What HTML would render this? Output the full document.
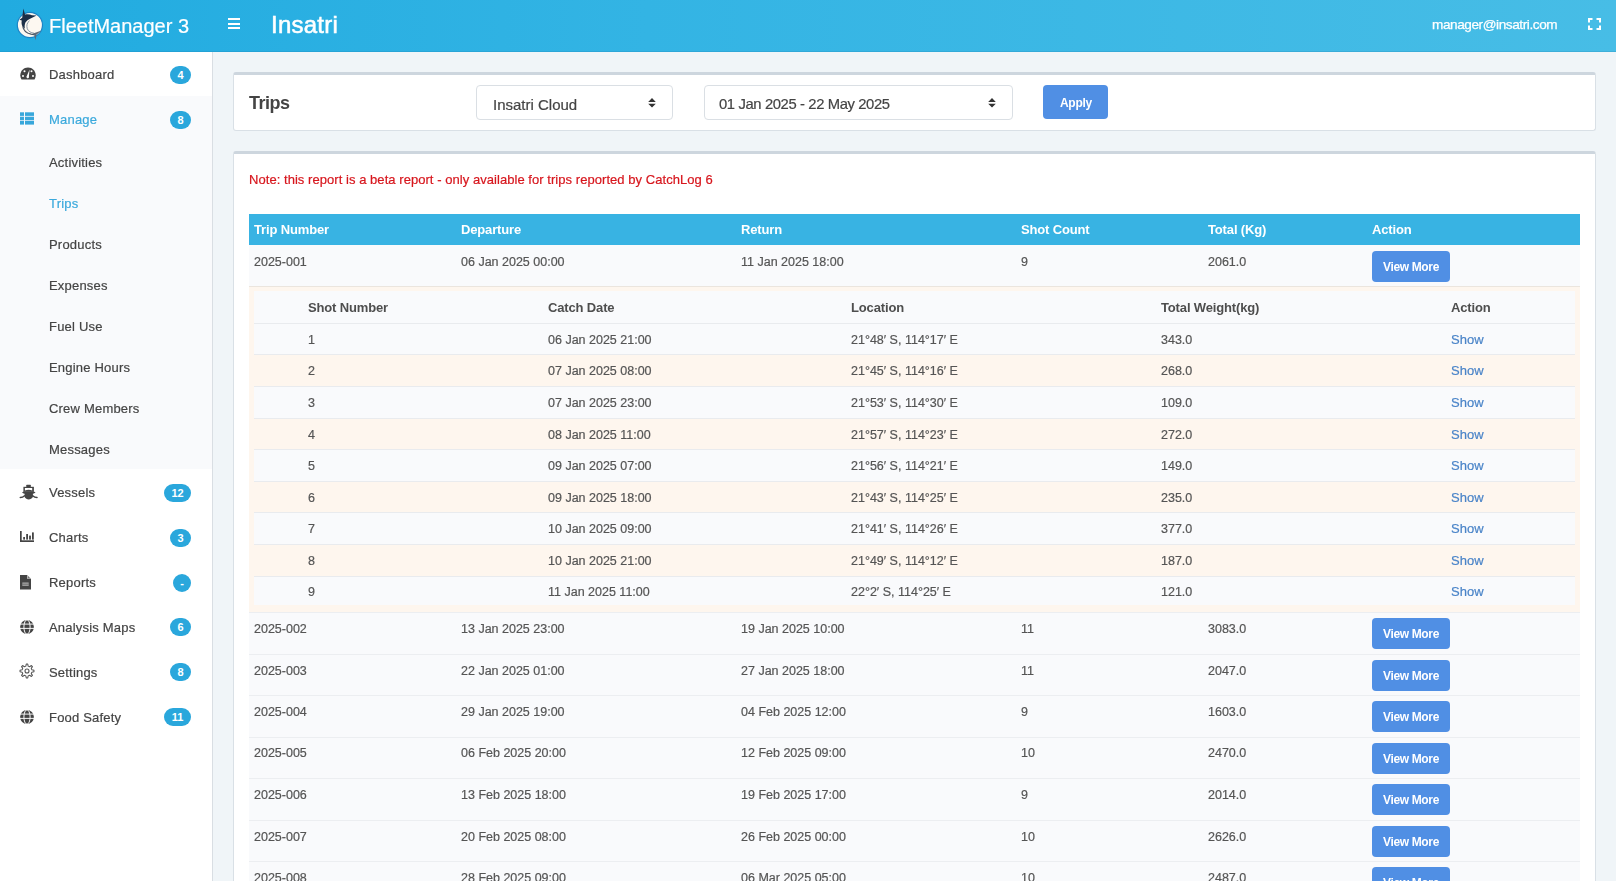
<!DOCTYPE html>
<html><head><meta charset="utf-8">
<style>
*{box-sizing:border-box;margin:0;padding:0}
html,body{width:1616px;height:881px;overflow:hidden}
body{font-family:"Liberation Sans",sans-serif;background:#f0f5f8;color:#444;position:relative}
.tx{position:absolute;white-space:nowrap;will-change:transform;-webkit-text-stroke:0.2px currentColor}
.hdr{position:absolute;left:0;top:0;width:1616px;height:52px;background:linear-gradient(90deg,#21abe0 0%,#33b4e4 40%,#47bde6 100%);box-shadow:inset 0 -1px 0 rgba(20,110,160,.18)}
.side{position:absolute;left:0;top:52px;width:213px;height:829px;background:#fff;border-right:1px solid #d9dee3}
.sub{position:absolute;left:0;top:44px;width:212px;height:373px;background:#f9fafc}
.bdg{position:absolute;height:18px;border-radius:9px;background:#2aa7dc;color:#fff;font-size:11px;font-weight:bold;text-align:center;line-height:18px}
.box{position:absolute;background:#fff;border:1px solid #d9e0e6;border-top:3px solid #cdd6de;border-radius:3px}
.sel{position:absolute;border:1px solid #dadfe4;border-radius:4px;background:#fff}
.btn{position:absolute;background:#508fe4;border-radius:4px;color:#fff}
.abs{position:absolute}
svg{position:absolute;overflow:visible}
</style></head><body>

<div class="hdr">
<svg style="left:0;top:0" width="60" height="52" viewBox="0 0 60 52">
<circle cx="29.9" cy="25" r="12.6" fill="#fdf8f1" stroke="#1b84c6" stroke-width="1.2"/>
<path d="M23.4 8.6 L25 14.6 C27 14 30 14.3 32 15.2 L36.6 15.4 L32.6 17.6 C31 18.6 29 19.2 27.5 20.2 L25.6 22.2 C24.6 24.2 24.4 26.5 24.9 28.8 L22.6 26.8 C21.5 24.6 21.3 22.3 21.8 20.6 L19.4 19.8 L22.2 17.8 Z" fill="#1c2f48"/>
<path d="M22.8 26.5 C23.5 30.5 26.5 33.2 31 34.2 L34 34.6" stroke="#4a5565" stroke-width="1.3" fill="none"/>
<path d="M29.5 20.8 C27 22.5 26.3 25.5 27.3 28.8 C28.5 31.5 31 32.8 34 33.2" stroke="#8a96a4" stroke-width="1" fill="none"/>
<path d="M33 33.6 L41.6 30.4 L36.4 34.8 L35.6 40.2 L34.2 35.2 Z" fill="#5d6a79"/>
</svg>
<div class="tx" style="left:49px;top:11px;font-size:20px;line-height:30px;color:#fff;">FleetManager 3</div>
<div class="abs" style="left:228px;top:18.3px;width:12px;height:2px;background:#fff"></div>
<div class="abs" style="left:228px;top:22.8px;width:12px;height:2px;background:#fff"></div>
<div class="abs" style="left:228px;top:27.1px;width:12px;height:2px;background:#fff"></div>
<div class="tx" style="left:270.5px;top:10px;font-size:24px;line-height:30px;color:#fff;letter-spacing:0.25px;-webkit-text-stroke:0.55px #fff;">Insatri</div>
<div class="tx" style="left:1432px;top:10px;font-size:13.6px;line-height:30px;color:#fff;letter-spacing:-0.42px;-webkit-text-stroke:0.25px #fff;">manager@insatri.com</div>
<svg style="left:1588px;top:18px" width="13" height="12" viewBox="0 0 13 12">
<path d="M1 4.5V1H4.5 M8.5 1H12V4.5 M12 7.5V11H8.5 M4.5 11H1V7.5" stroke="#fff" stroke-width="2" fill="none"/>
</svg>
</div>
<div class="side"><div class="sub"></div></div>
<div class="tx" style="left:48.5px;top:60px;font-size:13px;line-height:30px;color:#444;letter-spacing:0.2px;">Dashboard</div>
<svg style="left:20px;top:67.4px" width="16" height="13" viewBox="0 0 16 13">
<path d="M8 0.5C3.8 0.5 0.3 3.9 0.3 8.2c0 1.6 .4 3 1.2 4.3h13c.8-1.3 1.2-2.7 1.2-4.3C15.7 3.9 12.2 .5 8 .5z" fill="#444"/>
<circle cx="3" cy="9" r="1" fill="#fff"/><circle cx="4.5" cy="4.3" r="1" fill="#fff"/><circle cx="13" cy="9" r="1" fill="#fff"/><circle cx="11.5" cy="4.3" r="1" fill="#fff"/>
<path d="M9.6 2.6L8.9 9.3a1.3 1.3 0 1 1-2.1-.3z" fill="#fff"/></svg>
<div class="bdg" style="left:170px;top:66.0px;width:21px">4</div>
<div class="tx" style="left:48.5px;top:105px;font-size:13px;line-height:30px;color:#3ba9dc;letter-spacing:0.2px;">Manage</div>
<svg style="left:20px;top:112.1px" width="14" height="13" viewBox="0 0 14 13">
<g fill="#38a7db"><rect x="0" y="0.3" width="4" height="3.6"/><rect x="5" y="0.3" width="9" height="3.6"/>
<rect x="0" y="4.7" width="4" height="3.6"/><rect x="5" y="4.7" width="9" height="3.6"/>
<rect x="0" y="9" width="4" height="3.6"/><rect x="5" y="9" width="9" height="3.6"/></g></svg>
<div class="bdg" style="left:170px;top:110.7px;width:21px">8</div>
<div class="tx" style="left:48.5px;top:148px;font-size:13px;line-height:30px;color:#444;letter-spacing:0.2px;">Activities</div>
<div class="tx" style="left:48.5px;top:189px;font-size:13px;line-height:30px;color:#3ba9dc;letter-spacing:0.2px;">Trips</div>
<div class="tx" style="left:48.5px;top:230px;font-size:13px;line-height:30px;color:#444;letter-spacing:0.2px;">Products</div>
<div class="tx" style="left:48.5px;top:271px;font-size:13px;line-height:30px;color:#444;letter-spacing:0.2px;">Expenses</div>
<div class="tx" style="left:48.5px;top:312px;font-size:13px;line-height:30px;color:#444;letter-spacing:0.2px;">Fuel Use</div>
<div class="tx" style="left:48.5px;top:353px;font-size:13px;line-height:30px;color:#444;letter-spacing:0.2px;">Engine Hours</div>
<div class="tx" style="left:48.5px;top:394px;font-size:13px;line-height:30px;color:#444;letter-spacing:0.2px;">Crew Members</div>
<div class="tx" style="left:48.5px;top:435px;font-size:13px;line-height:30px;color:#444;letter-spacing:0.2px;">Messages</div>
<div class="tx" style="left:48.5px;top:478px;font-size:13px;line-height:30px;color:#444;letter-spacing:0.2px;">Vessels</div>
<svg style="left:17px;top:481px" width="24" height="21" viewBox="0 0 24 21">
<g fill="#444"><rect x="9.3" y="3.8" width="4.5" height="2.6" rx=".5"/>
<path d="M6.4 5.8h10.5v5h-10.5z"/>
<path d="M6.6 10.6 L5 11.6 L6.6 12.6 L7.6 12.8 L7.6 16 C8.5 17.6 10 18.4 11.7 18.4 C13.4 18.4 14.9 17.6 15.9 16 L15.9 12.8 L16.9 12.6 L18.6 11.6 L16.9 10.6Z"/></g>
<path d="M7.9 7.1h7.3v2.4 C14 9.1 13 8.8 11.6 8.8 C10.2 8.8 9.1 9.1 7.9 9.5z" fill="#fff"/>
<path d="M3.3 16.6 C5 16.6 6.5 15.8 7.6 14.7 M20 16.6 C18.3 16.6 16.8 15.8 15.7 14.7" stroke="#444" stroke-width="1.5" fill="none" stroke-linecap="round"/></svg>
<div class="bdg" style="left:164px;top:483.6px;width:27px">12</div>
<div class="tx" style="left:48.5px;top:523px;font-size:13px;line-height:30px;color:#444;letter-spacing:0.2px;">Charts</div>
<svg style="left:20px;top:531px" width="14" height="11" viewBox="0 0 14 11">
<g fill="#444"><rect x="0" y="0" width="1.7" height="11"/><rect x="0" y="9.3" width="14" height="1.7"/>
<rect x="3.2" y="6" width="1.8" height="2.6"/><rect x="6.2" y="3" width="1.8" height="5.6"/><rect x="9.1" y="4.6" width="1.8" height="4"/><rect x="12" y="1.4" width="1.8" height="7.2"/></g></svg>
<div class="bdg" style="left:170px;top:528.6px;width:21px">3</div>
<div class="tx" style="left:48.5px;top:568px;font-size:13px;line-height:30px;color:#444;letter-spacing:0.2px;">Reports</div>
<svg style="left:20px;top:574.8px" width="11" height="15" viewBox="0 0 11 15">
<path d="M0 0h7.2l3.8 3.8v10.7H0z" fill="#444"/><path d="M7.2 0v3.8H11z" fill="#fff"/><path d="M7.6 .6v2.8h2.8" fill="#777"/>
<rect x="2.3" y="7.4" width="6.4" height="3.6" fill="#9a9a9a"/><rect x="2.3" y="8.9" width="6.4" height=".6" fill="#666"/></svg>
<div class="bdg" style="left:173px;top:573.6px;width:18px">-</div>
<div class="tx" style="left:48.5px;top:613px;font-size:13px;line-height:30px;color:#444;letter-spacing:0.2px;">Analysis Maps</div>
<svg style="left:19.7px;top:620.0px" width="14" height="14" viewBox="0 0 14 14">
<circle cx="7" cy="7" r="6.9" fill="#444"/>
<g stroke="#fff" stroke-width=".95" fill="none"><path d="M0 4.1h14M0 8.4h14"/><ellipse cx="7" cy="7" rx="3.1" ry="7.2"/></g></svg>
<div class="bdg" style="left:170px;top:618.4px;width:21px">6</div>
<div class="tx" style="left:48.5px;top:658px;font-size:13px;line-height:30px;color:#444;letter-spacing:0.2px;">Settings</div>
<svg style="left:19px;top:663.0999999999999px" width="16" height="16" viewBox="0 0 16 16">
<path d="M6.83 3.14 L7.27 1.04 L8.73 1.04 L9.17 3.14 L10.61 3.74 L12.41 2.56 L13.44 3.59 L12.26 5.39 L12.86 6.83 L14.96 7.27 L14.96 8.73 L12.86 9.17 L12.26 10.61 L13.44 12.41 L12.41 13.44 L10.61 12.26 L9.17 12.86 L8.73 14.96 L7.27 14.96 L6.83 12.86 L5.39 12.26 L3.59 13.44 L2.56 12.41 L3.74 10.61 L3.14 9.17 L1.04 8.73 L1.04 7.27 L3.14 6.83 L3.74 5.39 L2.56 3.59 L3.59 2.56 L5.39 3.74Z" fill="none" stroke="#555" stroke-width="1.05" stroke-linejoin="round"/>
<circle cx="8" cy="8" r="2" fill="none" stroke="#555" stroke-width="1.1"/></svg>
<div class="bdg" style="left:170px;top:663.4px;width:21px">8</div>
<div class="tx" style="left:48.5px;top:703px;font-size:13px;line-height:30px;color:#444;letter-spacing:0.2px;">Food Safety</div>
<svg style="left:19.7px;top:710.0px" width="14" height="14" viewBox="0 0 14 14">
<circle cx="7" cy="7" r="6.9" fill="#444"/>
<g stroke="#fff" stroke-width=".95" fill="none"><path d="M0 4.1h14M0 8.4h14"/><ellipse cx="7" cy="7" rx="3.1" ry="7.2"/></g></svg>
<div class="bdg" style="left:164px;top:708.4px;width:27px">11</div>
<div class="box" style="left:233px;top:72px;width:1363px;height:59px"></div>
<div class="tx" style="left:249px;top:88px;font-size:18px;line-height:30px;color:#444;font-weight:bold;-webkit-text-stroke:0;letter-spacing:-0.5px;">Trips</div>
<div class="sel" style="left:476px;top:85px;width:197px;height:35px"></div>
<div class="tx" style="left:493px;top:90px;font-size:15px;line-height:30px;color:#444;">Insatri Cloud</div>
<div class="sel" style="left:703.5px;top:85px;width:309.5px;height:35px"></div>
<div class="tx" style="left:719px;top:89px;font-size:14.8px;line-height:30px;color:#444;letter-spacing:-0.38px;">01 Jan 2025 - 22 May 2025</div>
<svg style="left:648px;top:98.2px" width="8" height="10" viewBox="0 0 8 10"><path d="M4 0L7.8 3.9H.2z M4 9.6L7.8 5.7H.2z" fill="#333"/></svg>
<svg style="left:987.5px;top:98.2px" width="8" height="10" viewBox="0 0 8 10"><path d="M4 0L7.8 3.9H.2z M4 9.6L7.8 5.7H.2z" fill="#333"/></svg>
<div class="btn" style="left:1043px;top:85px;width:65px;height:34px"></div>
<div class="tx" style="left:1059.5px;top:88px;font-size:12px;line-height:30px;color:#fff;font-weight:bold;-webkit-text-stroke:0;letter-spacing:-0.3px;">Apply</div>
<div class="box" style="left:233px;top:151px;width:1363px;height:760px"></div>
<div class="tx" style="left:249px;top:165px;font-size:13px;line-height:30px;color:#d7161d;letter-spacing:0.05px;">Note: this report is a beta report - only available for trips reported by CatchLog 6</div>
<div class="abs" style="left:249px;top:214px;width:1331px;height:31px;background:#38b3e3"></div>
<div class="tx" style="left:254px;top:215px;font-size:13px;line-height:30px;color:#fff;font-weight:bold;-webkit-text-stroke:0;letter-spacing:-0.15px;">Trip Number</div>
<div class="tx" style="left:461px;top:215px;font-size:13px;line-height:30px;color:#fff;font-weight:bold;-webkit-text-stroke:0;letter-spacing:-0.15px;">Departure</div>
<div class="tx" style="left:741px;top:215px;font-size:13px;line-height:30px;color:#fff;font-weight:bold;-webkit-text-stroke:0;letter-spacing:-0.15px;">Return</div>
<div class="tx" style="left:1021px;top:215px;font-size:13px;line-height:30px;color:#fff;font-weight:bold;-webkit-text-stroke:0;letter-spacing:-0.15px;">Shot Count</div>
<div class="tx" style="left:1208px;top:215px;font-size:13px;line-height:30px;color:#fff;font-weight:bold;-webkit-text-stroke:0;letter-spacing:-0.15px;">Total (Kg)</div>
<div class="tx" style="left:1372px;top:215px;font-size:13px;line-height:30px;color:#fff;font-weight:bold;-webkit-text-stroke:0;letter-spacing:-0.15px;">Action</div>
<div class="abs" style="left:249px;top:245px;width:1331px;height:41px;background:#f9fafc;"></div>
<div class="tx" style="left:254px;top:247px;font-size:12.5px;line-height:30px;color:#555;">2025-001</div>
<div class="tx" style="left:461px;top:247px;font-size:12.5px;line-height:30px;color:#555;">06 Jan 2025 00:00</div>
<div class="tx" style="left:741px;top:247px;font-size:12.5px;line-height:30px;color:#555;">11 Jan 2025 18:00</div>
<div class="tx" style="left:1021px;top:247px;font-size:12.5px;line-height:30px;color:#555;">9</div>
<div class="tx" style="left:1208px;top:247px;font-size:12.5px;line-height:30px;color:#555;">2061.0</div>
<div class="btn" style="left:1372px;top:251px;width:78px;height:30.5px"></div>
<div class="tx" style="left:1383px;top:252px;font-size:12px;line-height:30px;color:#fff;font-weight:bold;-webkit-text-stroke:0;letter-spacing:-0.35px;">View More</div>
<div class="abs" style="left:249px;top:286px;width:1331px;height:326px;background:#fef6ee;border-top:1px solid #ebe5de"></div>
<div class="abs" style="left:254px;top:291px;width:1321px;height:32px;background:#f9fafc"></div>
<div class="tx" style="left:308px;top:293px;font-size:13px;line-height:30px;color:#4e4e4e;font-weight:bold;-webkit-text-stroke:0;letter-spacing:-0.15px;">Shot Number</div>
<div class="tx" style="left:548px;top:293px;font-size:13px;line-height:30px;color:#4e4e4e;font-weight:bold;-webkit-text-stroke:0;letter-spacing:-0.15px;">Catch Date</div>
<div class="tx" style="left:851px;top:293px;font-size:13px;line-height:30px;color:#4e4e4e;font-weight:bold;-webkit-text-stroke:0;letter-spacing:-0.15px;">Location</div>
<div class="tx" style="left:1161px;top:293px;font-size:13px;line-height:30px;color:#4e4e4e;font-weight:bold;-webkit-text-stroke:0;letter-spacing:-0.15px;">Total Weight(kg)</div>
<div class="tx" style="left:1451px;top:293px;font-size:13px;line-height:30px;color:#4e4e4e;font-weight:bold;-webkit-text-stroke:0;letter-spacing:-0.15px;">Action</div>
<div class="abs" style="left:254px;top:323px;width:1321px;height:31px;background:#f9fafc;border-top:1px solid #e9ebee"></div>
<div class="tx" style="left:308px;top:325px;font-size:12.5px;line-height:30px;color:#555;">1</div>
<div class="tx" style="left:548px;top:325px;font-size:12.5px;line-height:30px;color:#555;">06 Jan 2025 21:00</div>
<div class="tx" style="left:851px;top:325px;font-size:12.5px;line-height:30px;color:#555;">21°48′ S, 114°17′ E</div>
<div class="tx" style="left:1161px;top:325px;font-size:12.5px;line-height:30px;color:#555;">343.0</div>
<div class="tx" style="left:1451px;top:325px;font-size:13px;line-height:30px;color:#4a84c8;">Show</div>
<div class="abs" style="left:254px;top:354px;width:1321px;height:32px;background:transparent;border-top:1px solid #e9ebee"></div>
<div class="tx" style="left:308px;top:356px;font-size:12.5px;line-height:30px;color:#555;">2</div>
<div class="tx" style="left:548px;top:356px;font-size:12.5px;line-height:30px;color:#555;">07 Jan 2025 08:00</div>
<div class="tx" style="left:851px;top:356px;font-size:12.5px;line-height:30px;color:#555;">21°45′ S, 114°16′ E</div>
<div class="tx" style="left:1161px;top:356px;font-size:12.5px;line-height:30px;color:#555;">268.0</div>
<div class="tx" style="left:1451px;top:356px;font-size:13px;line-height:30px;color:#4a84c8;">Show</div>
<div class="abs" style="left:254px;top:386px;width:1321px;height:32px;background:#f9fafc;border-top:1px solid #e9ebee"></div>
<div class="tx" style="left:308px;top:388px;font-size:12.5px;line-height:30px;color:#555;">3</div>
<div class="tx" style="left:548px;top:388px;font-size:12.5px;line-height:30px;color:#555;">07 Jan 2025 23:00</div>
<div class="tx" style="left:851px;top:388px;font-size:12.5px;line-height:30px;color:#555;">21°53′ S, 114°30′ E</div>
<div class="tx" style="left:1161px;top:388px;font-size:12.5px;line-height:30px;color:#555;">109.0</div>
<div class="tx" style="left:1451px;top:388px;font-size:13px;line-height:30px;color:#4a84c8;">Show</div>
<div class="abs" style="left:254px;top:418px;width:1321px;height:31px;background:transparent;border-top:1px solid #e9ebee"></div>
<div class="tx" style="left:308px;top:420px;font-size:12.5px;line-height:30px;color:#555;">4</div>
<div class="tx" style="left:548px;top:420px;font-size:12.5px;line-height:30px;color:#555;">08 Jan 2025 11:00</div>
<div class="tx" style="left:851px;top:420px;font-size:12.5px;line-height:30px;color:#555;">21°57′ S, 114°23′ E</div>
<div class="tx" style="left:1161px;top:420px;font-size:12.5px;line-height:30px;color:#555;">272.0</div>
<div class="tx" style="left:1451px;top:420px;font-size:13px;line-height:30px;color:#4a84c8;">Show</div>
<div class="abs" style="left:254px;top:449px;width:1321px;height:32px;background:#f9fafc;border-top:1px solid #e9ebee"></div>
<div class="tx" style="left:308px;top:451px;font-size:12.5px;line-height:30px;color:#555;">5</div>
<div class="tx" style="left:548px;top:451px;font-size:12.5px;line-height:30px;color:#555;">09 Jan 2025 07:00</div>
<div class="tx" style="left:851px;top:451px;font-size:12.5px;line-height:30px;color:#555;">21°56′ S, 114°21′ E</div>
<div class="tx" style="left:1161px;top:451px;font-size:12.5px;line-height:30px;color:#555;">149.0</div>
<div class="tx" style="left:1451px;top:451px;font-size:13px;line-height:30px;color:#4a84c8;">Show</div>
<div class="abs" style="left:254px;top:481px;width:1321px;height:31px;background:transparent;border-top:1px solid #e9ebee"></div>
<div class="tx" style="left:308px;top:483px;font-size:12.5px;line-height:30px;color:#555;">6</div>
<div class="tx" style="left:548px;top:483px;font-size:12.5px;line-height:30px;color:#555;">09 Jan 2025 18:00</div>
<div class="tx" style="left:851px;top:483px;font-size:12.5px;line-height:30px;color:#555;">21°43′ S, 114°25′ E</div>
<div class="tx" style="left:1161px;top:483px;font-size:12.5px;line-height:30px;color:#555;">235.0</div>
<div class="tx" style="left:1451px;top:483px;font-size:13px;line-height:30px;color:#4a84c8;">Show</div>
<div class="abs" style="left:254px;top:512px;width:1321px;height:32px;background:#f9fafc;border-top:1px solid #e9ebee"></div>
<div class="tx" style="left:308px;top:514px;font-size:12.5px;line-height:30px;color:#555;">7</div>
<div class="tx" style="left:548px;top:514px;font-size:12.5px;line-height:30px;color:#555;">10 Jan 2025 09:00</div>
<div class="tx" style="left:851px;top:514px;font-size:12.5px;line-height:30px;color:#555;">21°41′ S, 114°26′ E</div>
<div class="tx" style="left:1161px;top:514px;font-size:12.5px;line-height:30px;color:#555;">377.0</div>
<div class="tx" style="left:1451px;top:514px;font-size:13px;line-height:30px;color:#4a84c8;">Show</div>
<div class="abs" style="left:254px;top:544px;width:1321px;height:32px;background:transparent;border-top:1px solid #e9ebee"></div>
<div class="tx" style="left:308px;top:546px;font-size:12.5px;line-height:30px;color:#555;">8</div>
<div class="tx" style="left:548px;top:546px;font-size:12.5px;line-height:30px;color:#555;">10 Jan 2025 21:00</div>
<div class="tx" style="left:851px;top:546px;font-size:12.5px;line-height:30px;color:#555;">21°49′ S, 114°12′ E</div>
<div class="tx" style="left:1161px;top:546px;font-size:12.5px;line-height:30px;color:#555;">187.0</div>
<div class="tx" style="left:1451px;top:546px;font-size:13px;line-height:30px;color:#4a84c8;">Show</div>
<div class="abs" style="left:254px;top:576px;width:1321px;height:29px;background:#f9fafc;border-top:1px solid #e9ebee"></div>
<div class="tx" style="left:308px;top:577px;font-size:12.5px;line-height:30px;color:#555;">9</div>
<div class="tx" style="left:548px;top:577px;font-size:12.5px;line-height:30px;color:#555;">11 Jan 2025 11:00</div>
<div class="tx" style="left:851px;top:577px;font-size:12.5px;line-height:30px;color:#555;">22°2′ S, 114°25′ E</div>
<div class="tx" style="left:1161px;top:577px;font-size:12.5px;line-height:30px;color:#555;">121.0</div>
<div class="tx" style="left:1451px;top:577px;font-size:13px;line-height:30px;color:#4a84c8;">Show</div>
<div class="abs" style="left:249px;top:612px;width:1331px;height:42px;background:#f9fafc;border-top:1px solid #eceef1"></div>
<div class="tx" style="left:254px;top:614px;font-size:12.5px;line-height:30px;color:#555;">2025-002</div>
<div class="tx" style="left:461px;top:614px;font-size:12.5px;line-height:30px;color:#555;">13 Jan 2025 23:00</div>
<div class="tx" style="left:741px;top:614px;font-size:12.5px;line-height:30px;color:#555;">19 Jan 2025 10:00</div>
<div class="tx" style="left:1021px;top:614px;font-size:12.5px;line-height:30px;color:#555;">11</div>
<div class="tx" style="left:1208px;top:614px;font-size:12.5px;line-height:30px;color:#555;">3083.0</div>
<div class="btn" style="left:1372px;top:618px;width:78px;height:30.5px"></div>
<div class="tx" style="left:1383px;top:619px;font-size:12px;line-height:30px;color:#fff;font-weight:bold;-webkit-text-stroke:0;letter-spacing:-0.35px;">View More</div>
<div class="abs" style="left:249px;top:654px;width:1331px;height:41px;background:#f9fafc;border-top:1px solid #eceef1"></div>
<div class="tx" style="left:254px;top:656px;font-size:12.5px;line-height:30px;color:#555;">2025-003</div>
<div class="tx" style="left:461px;top:656px;font-size:12.5px;line-height:30px;color:#555;">22 Jan 2025 01:00</div>
<div class="tx" style="left:741px;top:656px;font-size:12.5px;line-height:30px;color:#555;">27 Jan 2025 18:00</div>
<div class="tx" style="left:1021px;top:656px;font-size:12.5px;line-height:30px;color:#555;">11</div>
<div class="tx" style="left:1208px;top:656px;font-size:12.5px;line-height:30px;color:#555;">2047.0</div>
<div class="btn" style="left:1372px;top:660px;width:78px;height:30.5px"></div>
<div class="tx" style="left:1383px;top:661px;font-size:12px;line-height:30px;color:#fff;font-weight:bold;-webkit-text-stroke:0;letter-spacing:-0.35px;">View More</div>
<div class="abs" style="left:249px;top:695px;width:1331px;height:42px;background:#f9fafc;border-top:1px solid #eceef1"></div>
<div class="tx" style="left:254px;top:697px;font-size:12.5px;line-height:30px;color:#555;">2025-004</div>
<div class="tx" style="left:461px;top:697px;font-size:12.5px;line-height:30px;color:#555;">29 Jan 2025 19:00</div>
<div class="tx" style="left:741px;top:697px;font-size:12.5px;line-height:30px;color:#555;">04 Feb 2025 12:00</div>
<div class="tx" style="left:1021px;top:697px;font-size:12.5px;line-height:30px;color:#555;">9</div>
<div class="tx" style="left:1208px;top:697px;font-size:12.5px;line-height:30px;color:#555;">1603.0</div>
<div class="btn" style="left:1372px;top:701px;width:78px;height:30.5px"></div>
<div class="tx" style="left:1383px;top:702px;font-size:12px;line-height:30px;color:#fff;font-weight:bold;-webkit-text-stroke:0;letter-spacing:-0.35px;">View More</div>
<div class="abs" style="left:249px;top:737px;width:1331px;height:41px;background:#f9fafc;border-top:1px solid #eceef1"></div>
<div class="tx" style="left:254px;top:738px;font-size:12.5px;line-height:30px;color:#555;">2025-005</div>
<div class="tx" style="left:461px;top:738px;font-size:12.5px;line-height:30px;color:#555;">06 Feb 2025 20:00</div>
<div class="tx" style="left:741px;top:738px;font-size:12.5px;line-height:30px;color:#555;">12 Feb 2025 09:00</div>
<div class="tx" style="left:1021px;top:738px;font-size:12.5px;line-height:30px;color:#555;">10</div>
<div class="tx" style="left:1208px;top:738px;font-size:12.5px;line-height:30px;color:#555;">2470.0</div>
<div class="btn" style="left:1372px;top:743px;width:78px;height:30.5px"></div>
<div class="tx" style="left:1383px;top:744px;font-size:12px;line-height:30px;color:#fff;font-weight:bold;-webkit-text-stroke:0;letter-spacing:-0.35px;">View More</div>
<div class="abs" style="left:249px;top:778px;width:1331px;height:42px;background:#f9fafc;border-top:1px solid #eceef1"></div>
<div class="tx" style="left:254px;top:780px;font-size:12.5px;line-height:30px;color:#555;">2025-006</div>
<div class="tx" style="left:461px;top:780px;font-size:12.5px;line-height:30px;color:#555;">13 Feb 2025 18:00</div>
<div class="tx" style="left:741px;top:780px;font-size:12.5px;line-height:30px;color:#555;">19 Feb 2025 17:00</div>
<div class="tx" style="left:1021px;top:780px;font-size:12.5px;line-height:30px;color:#555;">9</div>
<div class="tx" style="left:1208px;top:780px;font-size:12.5px;line-height:30px;color:#555;">2014.0</div>
<div class="btn" style="left:1372px;top:784px;width:78px;height:30.5px"></div>
<div class="tx" style="left:1383px;top:785px;font-size:12px;line-height:30px;color:#fff;font-weight:bold;-webkit-text-stroke:0;letter-spacing:-0.35px;">View More</div>
<div class="abs" style="left:249px;top:820px;width:1331px;height:41px;background:#f9fafc;border-top:1px solid #eceef1"></div>
<div class="tx" style="left:254px;top:822px;font-size:12.5px;line-height:30px;color:#555;">2025-007</div>
<div class="tx" style="left:461px;top:822px;font-size:12.5px;line-height:30px;color:#555;">20 Feb 2025 08:00</div>
<div class="tx" style="left:741px;top:822px;font-size:12.5px;line-height:30px;color:#555;">26 Feb 2025 00:00</div>
<div class="tx" style="left:1021px;top:822px;font-size:12.5px;line-height:30px;color:#555;">10</div>
<div class="tx" style="left:1208px;top:822px;font-size:12.5px;line-height:30px;color:#555;">2626.0</div>
<div class="btn" style="left:1372px;top:826px;width:78px;height:30.5px"></div>
<div class="tx" style="left:1383px;top:827px;font-size:12px;line-height:30px;color:#fff;font-weight:bold;-webkit-text-stroke:0;letter-spacing:-0.35px;">View More</div>
<div class="abs" style="left:249px;top:861px;width:1331px;height:42px;background:#f9fafc;border-top:1px solid #eceef1"></div>
<div class="tx" style="left:254px;top:863px;font-size:12.5px;line-height:30px;color:#555;">2025-008</div>
<div class="tx" style="left:461px;top:863px;font-size:12.5px;line-height:30px;color:#555;">28 Feb 2025 09:00</div>
<div class="tx" style="left:741px;top:863px;font-size:12.5px;line-height:30px;color:#555;">06 Mar 2025 05:00</div>
<div class="tx" style="left:1021px;top:863px;font-size:12.5px;line-height:30px;color:#555;">10</div>
<div class="tx" style="left:1208px;top:863px;font-size:12.5px;line-height:30px;color:#555;">2487.0</div>
<div class="btn" style="left:1372px;top:867px;width:78px;height:30.5px"></div>
<div class="tx" style="left:1383px;top:868px;font-size:12px;line-height:30px;color:#fff;font-weight:bold;-webkit-text-stroke:0;letter-spacing:-0.35px;">View More</div>
</body></html>
